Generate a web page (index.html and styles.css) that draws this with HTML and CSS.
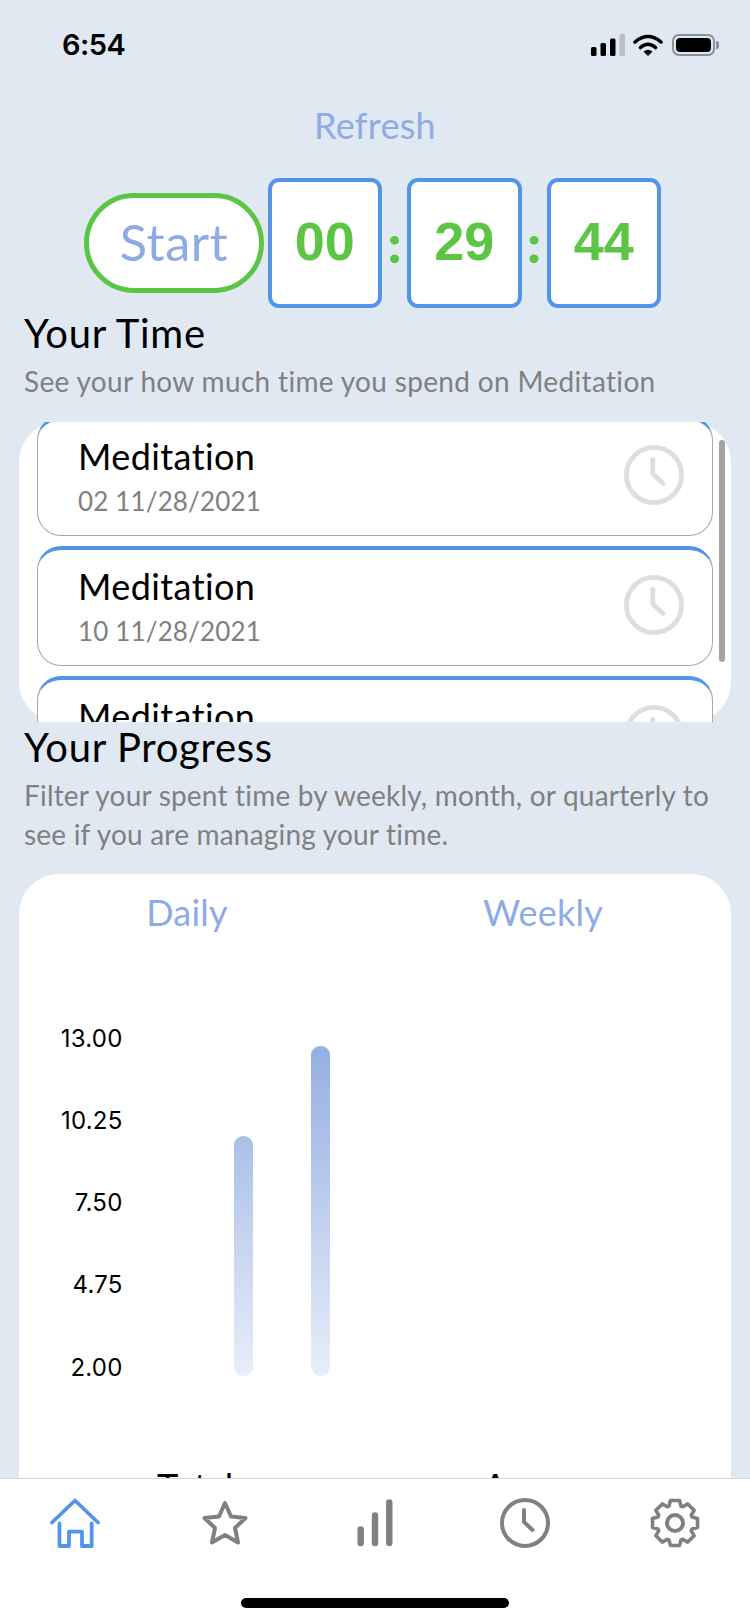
FILE: index.html
```html
<!DOCTYPE html>
<html lang="en">
<head>
<meta charset="utf-8">
<title>Meditation</title>
<link rel="stylesheet" href="styles.css">
</head>
<body>
<svg class="defs" width="0" height="0" aria-hidden="true">
  <symbol id="clock" viewBox="0 0 50 50">
    <circle cx="25" cy="25" r="23" fill="none" stroke="currentColor" stroke-width="4"/>
    <path d="M24 12V24L32.5 32" fill="none" stroke="currentColor" stroke-width="4" stroke-linecap="round" stroke-linejoin="round"/>
  </symbol>
</svg>
<div class="app">
  <main class="main">
    <header class="status">
      <span class="status-time">6:54</span>
      <span class="status-icons">
        <svg class="signal" viewBox="0 0 34 22" width="34" height="22">
          <rect x="0" y="13" width="5.5" height="9" rx="1.5" fill="#000"/>
          <rect x="9.5" y="9" width="5.500" height="13" rx="1.5" fill="#000"/>
          <rect x="19" y="4.5" width="5.500" height="17.5" rx="1.5" fill="#000"/>
          <rect x="28.500" y="0" width="5.500" height="22" rx="1.5" fill="#b7bec8"/>
        </svg>
        <svg class="wifi" viewBox="0 0 30 22" width="30" height="22">
          <path d="M2 8Q15 -3 28 8" fill="none" stroke="#000" stroke-width="3.6" stroke-linecap="round"/>
          <path d="M7.5 13.5Q15 7 22.500 13.500" fill="none" stroke="#000" stroke-width="3.600" stroke-linecap="round"/>
          <path d="M15 22L10.500 17.500Q15 14 19.500 17.500Z" fill="#000"/>
        </svg>
        <span class="battery"><span class="battery-fill"></span></span>
        <span class="battery-nub"></span>
      </span>
    </header>

    <div class="refresh">Refresh</div>

    <section class="timer">
      <button class="start">Start</button>
      <div class="digit">00</div>
      <div class="colon">:</div>
      <div class="digit">29</div>
      <div class="colon">:</div>
      <div class="digit">44</div>
    </section>

    <section class="intro intro-time">
      <h2 class="title">Your Time</h2>
      <p class="sub">See your how much time you spend on Meditation</p>
    </section>

    <section class="list-card">
      <div class="scroller">
        <article class="item item-first">
          <div class="item-text">
            <div class="item-name">Meditation</div>
            <div class="item-date">02 11/28/2021</div>
          </div>
          <svg class="item-clock"><use href="#clock"/></svg>
        </article>
        <article class="item">
          <div class="item-text">
            <div class="item-name">Meditation</div>
            <div class="item-date">10 11/28/2021</div>
          </div>
          <svg class="item-clock"><use href="#clock"/></svg>
        </article>
        <article class="item">
          <div class="item-text">
            <div class="item-name">Meditation</div>
            <div class="item-date">12 11/28/2021</div>
          </div>
          <svg class="item-clock"><use href="#clock"/></svg>
        </article>
      </div>
      <div class="scrollbar"></div>
    </section>

    <section class="intro intro-progress">
      <h2 class="title">Your Progress</h2>
      <p class="sub">Filter your spent time by weekly, month, or quarterly to see if you are managing your time.</p>
    </section>

    <section class="chart-card">
      <div class="filters">
        <div class="filter">Daily</div>
        <div class="filter">Weekly</div>
      </div>
      <div class="chart">
        <div class="axis">
          <span class="tick">13.00</span>
          <span class="tick">10.25</span>
          <span class="tick">7.50</span>
          <span class="tick">4.75</span>
          <span class="tick">2.00</span>
        </div>
        <div class="bars">
          <div class="bar bar-a"></div>
          <div class="bar bar-b"></div>
        </div>
      </div>
      <div class="totals">
        <div class="total-label">Total</div>
        <div class="total-label">Average</div>
      </div>
    </section>
  </main>

  <nav class="tabbar">
    <div class="tabs">
      <svg class="tab tab-active" viewBox="0 0 50 50">
        <path d="M2 24.500L25 2.500L48 24.500" fill="none" stroke="currentColor" stroke-width="3.800" stroke-linecap="round" stroke-linejoin="round"/>
        <path d="M9.500 25.500V48H19V33.700H32V48H41.700V25.500" fill="none" stroke="currentColor" stroke-width="3.800" stroke-linecap="round" stroke-linejoin="round"/>
      </svg>
      <svg class="tab" viewBox="0 0 50 50">
        <path d="M25 5L31 18.500L45.500 20L35 30L38 44.500L25 37L12 44.500L15 30L4.500 20L19 18.500Z" fill="none" stroke="currentColor" stroke-width="4" stroke-linejoin="round"/>
      </svg>
      <svg class="tab" viewBox="0 0 50 50">
        <path d="M10.700 31.500V45M25 17.500V45M39.300 4.500V45" fill="none" stroke="currentColor" stroke-width="6.400" stroke-linecap="round"/>
      </svg>
      <svg class="tab"><use href="#clock"/></svg>
      <svg class="tab" viewBox="0 0 50 50">
        <path d="M19 8L20.500 2.500H29.500L31 8L32.780 8.740L37.730 5.910L44.090 12.270L41.260 17.220L42 19L47.500 20.500V29.500L42 31L41.260 32.780L44.090 37.730L37.730 44.090L32.780 41.260L31 42L29.500 47.500H20.500L19 42L17.220 41.260L12.270 44.090L5.910 37.730L8.740 32.780L8 31L2.500 29.500V20.500L8 19L8.740 17.220L5.910 12.270L12.270 5.910L17.220 8.740Z" fill="none" stroke="currentColor" stroke-width="3.600" stroke-linejoin="round"/>
        <circle cx="25" cy="25" r="8" fill="none" stroke="currentColor" stroke-width="4"/>
      </svg>
    </div>
    <div class="home-indicator"></div>
  </nav>
</div>
</body>
</html>
```

FILE: styles.css
```css
* { box-sizing: border-box; }

html, body {
  margin: 0;
  padding: 0;
}

body {
  width: 750px;
  height: 1624px;
  overflow: hidden;
  background: #e0e8f2;
  font-family: "Lato", "Liberation Sans", sans-serif;
  color: #000;
}

.defs { position: absolute; }

.app {
  display: flex;
  flex-direction: column;
  height: 1624px;
}

.main {
  flex: 1;
  min-height: 0;
  overflow: hidden;
}

.status {
  height: 90px;
  padding: 28px 31px 0 62px;
  display: flex;
  justify-content: space-between;
  align-items: flex-start;
}

.status-time {
  font-family: "Inter", "Liberation Sans", sans-serif;
  font-weight: 600;
  font-size: 29px;
  line-height: 34px;
  letter-spacing: -0.5px;
}

.status-icons {
  display: flex;
  align-items: center;
  height: 22px;
  margin-top: 6px;
}

.signal { margin-right: 8px; }
.wifi { margin-right: 9px; }

.battery {
  width: 43px;
  height: 22px;
  border: 2px solid #8b9098;
  border-radius: 7px;
  padding: 2px;
  display: flex;
}

.battery-fill {
  flex: 1;
  background: #000;
  border-radius: 4px;
}

.battery-nub {
  width: 3px;
  height: 8px;
  margin-left: 1px;
  background: #8b9098;
  border-radius: 0 2px 2px 0;
}

.refresh {
  height: 88px;
  padding-top: 12px;
  text-align: center;
  font-size: 36px;
  line-height: 46px;
  letter-spacing: 0.3px;
  color: #8fabe4;
}

.timer {
  display: flex;
  align-items: center;
  height: 130px;
  padding-left: 84px;
}

.start {
  width: 180px;
  height: 100px;
  margin-right: 3.5px;
  border: 5px solid #5cc546;
  border-radius: 50px;
  background: #fff;
  color: #8fabe4;
  font-family: inherit;
  font-size: 50.5px;
  letter-spacing: 0.5px;
  padding: 0 0 4px;
}

.digit {
  width: 114.5px;
  height: 130px;
  border: 4px solid #5294e8;
  border-radius: 11px;
  background: #fff;
  color: #5cc546;
  font-family: "Liberation Sans", sans-serif;
  font-weight: 700;
  font-size: 54px;
  line-height: 118px;
  text-align: center;
}

.colon {
  width: 25px;
  height: 130px;
  text-align: center;
  color: #5cc546;
  font-weight: 900;
  font-size: 54px;
  line-height: 130px;
}

.intro { padding: 0 24px; }
.intro-time { height: 114px; }
.intro-progress { height: 152px; }
.intro-progress .sub { letter-spacing: 0.2px; }

.title {
  margin: 0;
  padding-top: 2px;
  font-weight: 400;
  font-size: 40px;
  line-height: 46px;
  letter-spacing: 0.7px;
}

.sub {
  margin: 6px 0 0;
  font-size: 28px;
  line-height: 39px;
  letter-spacing: 0.33px;
  color: #808080;
}

.list-card {
  position: relative;
  height: 300px;
  margin: 0 19px;
  background: #fff;
  border-radius: 40px;
}

.scroller {
  height: 300px;
  margin: 0 18px;
  overflow: hidden;
}

.item {
  display: flex;
  align-items: center;
  justify-content: space-between;
  height: 120px;
  margin-bottom: 10px;
  padding: 0 28px 2px 40px;
  border: 1px solid #a8a8a8;
  border-top: 4px solid #5294e8;
  border-radius: 24px;
  background: #fff;
}

.item-first { margin-top: -6px; }

.item-name {
  font-size: 36px;
  line-height: 44px;
  letter-spacing: 0.4px;
}

.item-date {
  margin-top: 5px;
  font-size: 26px;
  line-height: 36px;
  letter-spacing: 0.15px;
  color: #808080;
}

.item-clock {
  width: 60px;
  height: 60px;
  margin-bottom: 3px;
  color: #dedede;
}

.scrollbar {
  position: absolute;
  top: 18px;
  right: 6px;
  width: 6px;
  height: 222px;
  border-radius: 3px;
  background: #a3a3a3;
}

.chart-card {
  margin: 0 19px;
  height: 700px;
  padding-top: 15px;
  background: #fff;
  border-radius: 40px 40px 0 0;
}

.filters {
  display: grid;
  grid-template-columns: 336px 356px;
  gap: 10px;
  height: 134.5px;
}

.filter {
  text-align: center;
  font-size: 36px;
  line-height: 46px;
  letter-spacing: 0.2px;
  color: #8fabe4;
}

.chart {
  display: flex;
  height: 358px;
  padding-left: 41px;
}

.axis {
  width: 62.5px;
  height: 358px;
  display: flex;
  flex-direction: column;
  align-items: flex-end;
  gap: 53.25px;
}

.tick {
  font-family: "Inter", "Liberation Sans", sans-serif;
  font-size: 24px;
  line-height: 29px;
  height: 29px;
  letter-spacing: 0.2px;
}

.bars {
  display: flex;
  align-items: flex-end;
  gap: 58px;
  height: 352px;
  margin-left: 111.5px;
}

.bar {
  width: 19px;
  border-radius: 9px;
  background: linear-gradient(#94afe2, #e8eef9) bottom / 100% 330px no-repeat;
}

.bar-a { height: 240px; }
.bar-b { height: 330px; }

.totals {
  display: grid;
  grid-template-columns: 326px auto;
  margin-top: 82px;
  padding-left: 138px;
}

.total-label {
  font-size: 36px;
  line-height: 44px;
}

.tabbar {
  flex: 0 0 146px;
  background: #fff;
  border-top: 1px solid #d8d8d8;
  position: relative;
}

.tabs {
  display: flex;
  justify-content: space-between;
  padding: 19px 50px 0;
}

.tab {
  width: 50px;
  height: 50px;
  color: #808080;
}

.tab-active { color: #5294e8; }

.home-indicator {
  position: absolute;
  left: 241px;
  top: 119px;
  width: 268px;
  height: 10px;
  border-radius: 5px;
  background: #000;
}
```
